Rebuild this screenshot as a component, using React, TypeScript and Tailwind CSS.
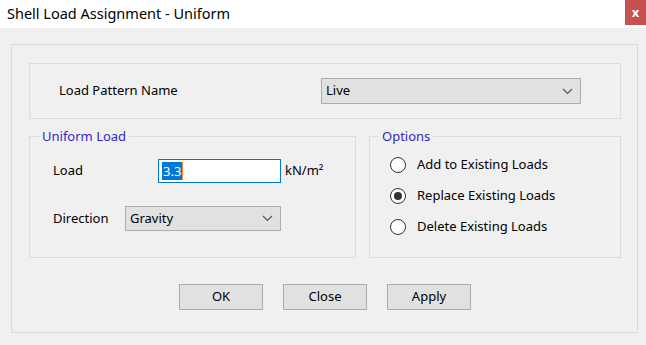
import React from 'react';

const Chevron = () => (
  <svg width="11" height="7" viewBox="0 0 11 7" className="shrink-0">
    <path d="M1 1 L5.5 5.5 L10 1" fill="none" stroke="#555" strokeWidth="1.2" />
  </svg>
);

const Combo = ({ value, className }: { value: string; className: string }) => (
  <div className={`flex items-center justify-between bg-[#e1e1e1] border border-[#adadad] pl-[4px] pr-[7px] ${className}`}>
    <span>{value}</span>
    <Chevron />
  </div>
);

const Radio = ({ label, checked }: { label: string; checked?: boolean }) => (
  <div className="flex items-center h-[20px]">
    <div className="w-[16px] h-[16px] rounded-full border border-[#333] bg-white flex items-center justify-center">
      {checked && <div className="w-[8px] h-[8px] rounded-full bg-[#333]" />}
    </div>
    <span className="ml-[11px]">{label}</span>
  </div>
);

const Button = ({ label }: { label: string }) => (
  <div className="w-[84px] h-[26px] bg-[#e1e1e1] border border-[#adadad] flex items-center justify-center">
    {label}
  </div>
);

const GroupBox = ({ title, className, children }: { title: string; className: string; children: React.ReactNode }) => (
  <div className={`relative border border-[#dcdcdc] ${className}`}>
    <span className="absolute left-[9px] top-[-11px] px-[3px] bg-[#f0f0f0] text-[#3328c4] leading-[20px]">{title}</span>
    {children}
  </div>
);

export default function App() {
  return (
    <div className="w-[646px] h-[345px] bg-[#f0f0f0] font-['Noto_Sans',sans-serif] text-[13px] text-black overflow-hidden">
      <div className="h-[28px] bg-white flex items-start justify-between">
        <span className="pl-[7px] pt-[1px] text-[14.5px] leading-[24px]">Shell Load Assignment - Uniform</span>
        <div className="w-[21px] h-[25px] bg-[#c75050] text-white flex items-center justify-center text-[13px] font-bold">x</div>
      </div>
      <div className="pl-[11px] pr-[8px] pt-[16px]">
        <div className="h-[289px] border border-[#dadada] pt-[18px] pl-[17px] pr-[16px]">
          <div className="h-[56px] border border-[#dcdcdc] flex items-center">
            <span className="pl-[29px] w-[291px]">Load Pattern Name</span>
            <Combo value="Live" className="w-[260px] h-[26px]" />
          </div>

          <div className="flex mt-[17px] gap-[13px]">
            <GroupBox title="Uniform Load" className="w-[327px] h-[122px] pt-[22px] pl-[23px]">
              <div className="flex items-center h-[24px]">
                <span className="w-[105px]">Load</span>
                <div className="w-[123px] h-[24px] bg-white border border-[#0078d7] flex items-center pl-[3px]">
                  <span className="bg-[#0078d7] text-white leading-[18px] px-[1px]">3.3</span>
                  <span className="w-[1px] h-[18px] bg-[#ff8a1f]" />
                </div>
                <span className="ml-[4px]">kN/m²</span>
              </div>
              <div className="flex items-center mt-[23px]">
                <span className="w-[72px]">Direction</span>
                <Combo value="Gravity" className="w-[156px] h-[25px]" />
              </div>
            </GroupBox>

            <GroupBox title="Options" className="w-[252px] h-[122px] pt-[18px] pl-[20px]">
              <div className="flex flex-col gap-[11px]">
                <Radio label="Add to Existing Loads" />
                <Radio label="Replace Existing Loads" checked />
                <Radio label="Delete Existing Loads" />
              </div>
            </GroupBox>
          </div>

          <div className="flex justify-center gap-[20px] mt-[26px]">
            <Button label="OK" />
            <Button label="Close" />
            <Button label="Apply" />
          </div>
        </div>
      </div>
    </div>
  );
}
